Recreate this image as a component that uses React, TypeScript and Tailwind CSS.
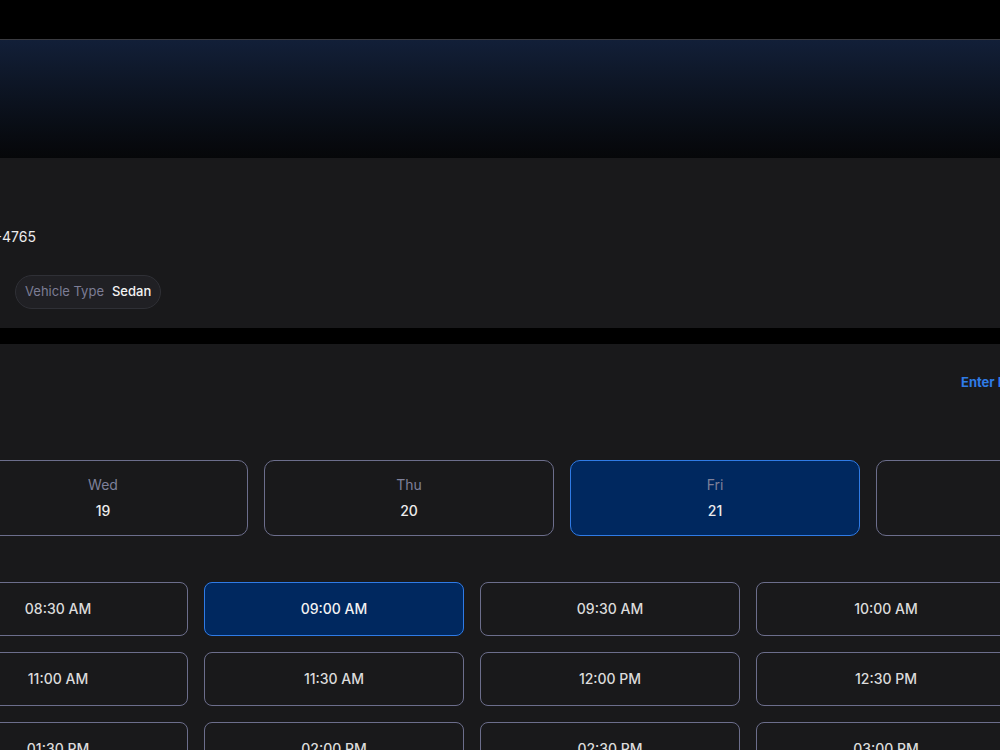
import React from "react"

const days = [
  { day: "Tue", date: "18" },
  { day: "Wed", date: "19" },
  { day: "Thu", date: "20" },
  { day: "Fri", date: "21" },
  { day: "Sat", date: "22" },
]

const slots = [
  "08:00 AM", "08:30 AM", "09:00 AM", "09:30 AM", "10:00 AM",
  "10:30 AM", "11:00 AM", "11:30 AM", "12:00 PM", "12:30 PM",
  "01:00 PM", "01:30 PM", "02:00 PM", "02:30 PM", "03:00 PM",
]

export default function App() {
  const selectedDay = "21"
  const selectedSlot = "09:00 AM"

  return (
    <div className="w-[1000px] h-[750px] overflow-hidden bg-black font-['Inter','Liberation_Sans',sans-serif] text-[14px]">
      {/* top bar */}
      <div className="h-[39px] bg-black" />

      {/* banner */}
      <div className="h-[119px] border-t border-[#3a3b40] bg-linear-to-b from-[#121f38] to-[#060709]" />

      {/* customer panel */}
      <div className="h-[170px] bg-[#19191b] flex flex-col">
        <div className="mt-[70px] -ml-[200px] w-[236px] text-right whitespace-nowrap text-[#ececec] leading-[18px]">
          (415) 555-4765
        </div>
        <div className="mt-[29px] flex">
          <div className="ml-[15px] h-[34px] flex items-center gap-[8px] rounded-full border border-[#2f3036] bg-[#202024] px-[9px] whitespace-nowrap text-[13px]">
            <span className="text-[#7c7d95]">Vehicle Type</span>
            <span className="text-[#f2f2f2] font-medium">Sedan</span>
          </div>
        </div>
      </div>

      <div className="h-4 bg-black" />

      {/* schedule panel */}
      <div className="h-[406px] bg-[#19191b] flex flex-col">
        <div className="mt-[30px] ml-[961px] whitespace-nowrap text-[13px] font-bold text-[#2f7be6] leading-[16px]">
          Enter Details Manually
        </div>

        <div className="mt-[70px] -ml-[348px] flex gap-4">
          {days.map((d) => {
            const active = d.date === selectedDay
            return (
              <div
                key={d.date}
                className={`shrink-0 w-[290px] h-[76px] rounded-[10px] border flex flex-col items-center justify-center gap-[8px] ${
                  active ? "bg-[#00285f] border-[#2f7be6]" : "border-[#6c6e8c]"
                }`}
              >
                <span className="text-[#7e809a] leading-[18px]">{d.day}</span>
                <span className="text-[#ececec] font-medium leading-[18px]">{d.date}</span>
              </div>
            )
          })}
        </div>

        <div className="mt-[46px] -ml-[348px] w-[1364px] grid grid-cols-[repeat(5,260px)] gap-4">
          {slots.map((s) => {
            const active = s === selectedSlot
            return (
              <div
                key={s}
                className={`h-[54px] rounded-[8px] border flex items-center justify-center font-medium leading-[18px] ${
                  active ? "bg-[#00285f] border-[#2f7be6] text-[#f2f2f2]" : "border-[#6c6e8c] text-[#dcdcdc]"
                }`}
              >
                {s}
              </div>
            )
          })}
        </div>
      </div>
    </div>
  )
}
